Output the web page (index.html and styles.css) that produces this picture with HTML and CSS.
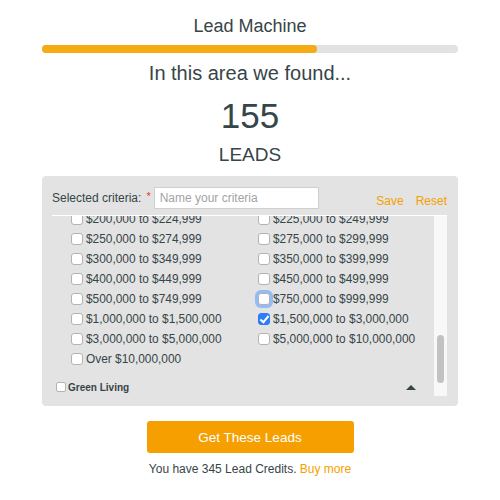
FILE: index.html
```html
<!DOCTYPE html>
<html>
  <head>
    <title>Lead Machine</title>
    <link rel="stylesheet" href="styles.css">
  </head>
  <body>
    <div class="wizard">
      <h1 class="title">Lead Machine</h1>
      <div class="progress"><div class="progress-fill" style="width: 66%"></div></div>
      <p class="found">In this area we found...</p>
      <p class="count">155</p>
      <p class="unit">LEADS</p>

      <div class="criteria">
        <div class="criteria-head">
          <label for="criteriaName">Selected criteria:</label>
          <span class="required">*</span>
          <input type="text" id="criteriaName" placeholder="Name your criteria">
          <a href="#" class="action">Save</a>
          <a href="#" class="action">Reset</a>
        </div>
        <div class="criteria-scroll">
          <div class="criteria-list">
            <div class="options">
              <label class="option"><input type="checkbox"> $200,000 to $224,999</label>
              <label class="option"><input type="checkbox"> $225,000 to $249,999</label>
              <label class="option"><input type="checkbox"> $250,000 to $274,999</label>
              <label class="option"><input type="checkbox"> $275,000 to $299,999</label>
              <label class="option"><input type="checkbox"> $300,000 to $349,999</label>
              <label class="option"><input type="checkbox"> $350,000 to $399,999</label>
              <label class="option"><input type="checkbox"> $400,000 to $449,999</label>
              <label class="option"><input type="checkbox"> $450,000 to $499,999</label>
              <label class="option"><input type="checkbox"> $500,000 to $749,999</label>
              <label class="option"><input type="checkbox" class="focused"> $750,000 to $999,999</label>
              <label class="option"><input type="checkbox"> $1,000,000 to $1,500,000</label>
              <label class="option"><input type="checkbox" checked> $1,500,000 to $3,000,000</label>
              <label class="option"><input type="checkbox"> $3,000,000 to $5,000,000</label>
              <label class="option"><input type="checkbox"> $5,000,000 to $10,000,000</label>
              <label class="option"><input type="checkbox"> Over $10,000,000</label>
            </div>
            <div class="group">
              <label class="group-name"><input type="checkbox"> Green Living</label>
              <span class="caret"></span>
            </div>
          </div>
          <div class="scrollbar"><div class="thumb"></div></div>
        </div>
      </div>

      <button class="get-leads">Get These Leads</button>
      <p class="credits">You have 345 Lead Credits. <a href="#">Buy more</a></p>
    </div>
  </body>
</html>
```

FILE: styles.css
```css
body {
  margin: 0;
  font-family: "Liberation Sans", Arial, sans-serif;
  color: #364548;
  background-color: white;
}
.wizard {
  width: 416px;
  margin: 0 auto;
  padding-top: 15px;
  text-align: center;
}
.title {
  margin: 0;
  font-size: 18px;
  line-height: 22px;
  font-weight: normal;
}
.progress {
  margin-top: 8px;
  height: 8px;
  border-radius: 4px;
  background-color: #e2e2e2;
}
.progress-fill {
  height: 100%;
  border-radius: 4px;
  background-color: #f6ab14;
}
.found {
  margin: 8px 0 0;
  font-size: 20px;
  line-height: 24px;
}
.count {
  margin: 11px 0 0;
  font-size: 35px;
  line-height: 40px;
}
.unit {
  margin: 8px 0 0;
  font-size: 19px;
  line-height: 22px;
}
.criteria {
  margin-top: 10px;
  padding: 11px 11px 10px 10px;
  border-radius: 4px;
  background-color: #e3e3e3;
  text-align: left;
}
.criteria-head {
  display: flex;
  align-items: center;
  height: 22px;
  margin-bottom: 6px;
  font-size: 12px;
}
.required {
  margin-left: 5px;
  color: #e53935;
  font-size: 11px;
  align-self: flex-start;
  margin-top: 3px;
}
#criteriaName {
  width: 165px;
  height: 22px;
  box-sizing: border-box;
  margin-left: 3px;
  padding: 0 5px;
  border: 1px solid #cfcfcf;
  font-family: inherit;
  font-size: 12px;
  color: #364548;
  outline: none;
}
#criteriaName::placeholder {
  color: #a3a3a3;
}
.action {
  margin-top: 5px;
  color: #f5a000;
  text-decoration: none;
}
.action:first-of-type {
  margin-left: auto;
}
.action + .action {
  margin-left: 12px;
}
.criteria-scroll {
  display: flex;
  height: 180px;
  border-top: 1px solid white;
}
.criteria-list {
  flex: 1;
  overflow: hidden;
}
.options {
  display: grid;
  grid-template-columns: 187px 187px;
  margin-top: -7px;
  padding-left: 19px;
}
.option {
  display: flex;
  align-items: center;
  height: 20px;
  font-size: 11.9px;
  white-space: nowrap;
}
.option input,
.group-name input {
  appearance: none;
  position: relative;
  width: 12px;
  height: 12px;
  margin: 0 3px 0 0;
  border: 1px solid #b3b3b3;
  border-radius: 3px;
  background-color: white;
  flex: none;
}
.option input:checked {
  border-color: #2f7df6;
  background-color: #2f7df6;
}
.option input:checked::after {
  content: "";
  position: absolute;
  left: 3px;
  top: 0px;
  width: 3px;
  height: 7px;
  border: solid white;
  border-width: 0 2px 2px 0;
  transform: rotate(40deg);
}
.option input.focused {
  box-shadow: 0 0 0 3px #93bbf5;
}
.group {
  display: flex;
  align-items: center;
  height: 16px;
  margin-top: 10px;
  padding-left: 4px;
  padding-right: 18px;
}
.group-name {
  display: flex;
  align-items: center;
  font-size: 10px;
  font-weight: bold;
}
.group-name input {
  width: 10px;
  height: 10px;
  border-radius: 2px;
  margin-right: 2px;
}
.caret {
  margin-left: auto;
  width: 0;
  height: 0;
  border-left: 5px solid transparent;
  border-right: 5px solid transparent;
  border-bottom: 5px solid #364548;
}
.scrollbar {
  width: 13px;
  background-color: #f8f8f8;
  display: flex;
  justify-content: center;
}
.thumb {
  width: 7px;
  height: 48px;
  margin-top: 119px;
  border-radius: 4px;
  background-color: #c2c2c2;
}
.get-leads {
  display: block;
  width: 207px;
  height: 32px;
  margin: 15px auto 0;
  border: none;
  border-radius: 3px;
  background-color: #f5a000;
  color: white;
  font-family: inherit;
  font-size: 13.5px;
}
.credits {
  margin: 8px 0 0;
  font-size: 12px;
  line-height: 16px;
}
.credits a {
  color: #f5a000;
  text-decoration: none;
}
```
